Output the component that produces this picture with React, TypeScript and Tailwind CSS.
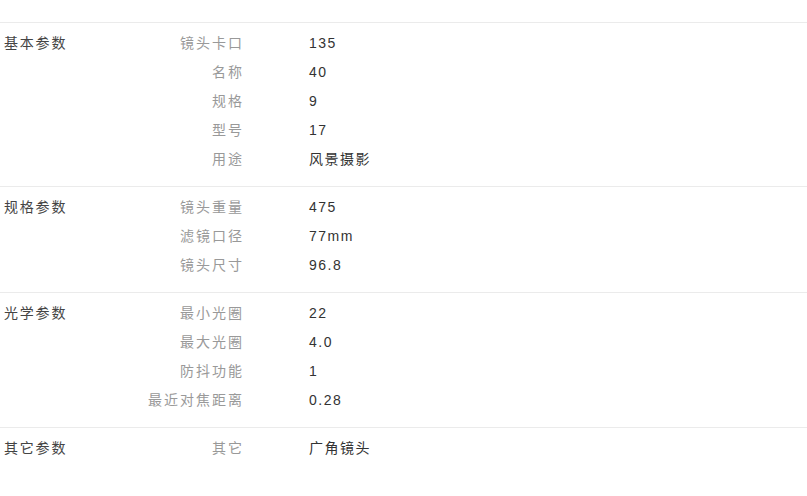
const sections: { title: string; rows: [string, string][] }[] = [
  {
    title: '基本参数',
    rows: [
      ['镜头卡口', '135'],
      ['名称', '40'],
      ['规格', '9'],
      ['型号', '17'],
      ['用途', '风景摄影'],
    ],
  },
  {
    title: '规格参数',
    rows: [
      ['镜头重量', '475'],
      ['滤镜口径', '77mm'],
      ['镜头尺寸', '96.8'],
    ],
  },
  {
    title: '光学参数',
    rows: [
      ['最小光圈', '22'],
      ['最大光圈', '4.0'],
      ['防抖功能', '1'],
      ['最近对焦距离', '0.28'],
    ],
  },
  {
    title: '其它参数',
    rows: [['其它', '广角镜头']],
  },
];

export default function App() {
  return (
    <div className="w-[807px] h-[496px] bg-white pt-[22px] text-[14px] font-['Liberation_Sans','Noto_Sans_CJK_SC',sans-serif] tracking-[1.5px]">
      {sections.map((s) => (
        <div key={s.title} className="flex border-t border-[#ebebeb] pt-[6px] pb-[12px]">
          <div className="w-[140px] pl-[4px] leading-[29px] text-[#444] tracking-[1.8px]">{s.title}</div>
          <div className="flex flex-col">
            {s.rows.map(([k, v]) => (
              <div key={k} className="flex leading-[29px]">
                <span className="w-[104px] text-right text-[#999] tracking-[2px]">{k}</span>
                <span className="ml-[65px] text-[#333]">{v}</span>
              </div>
            ))}
          </div>
        </div>
      ))}
    </div>
  );
}
